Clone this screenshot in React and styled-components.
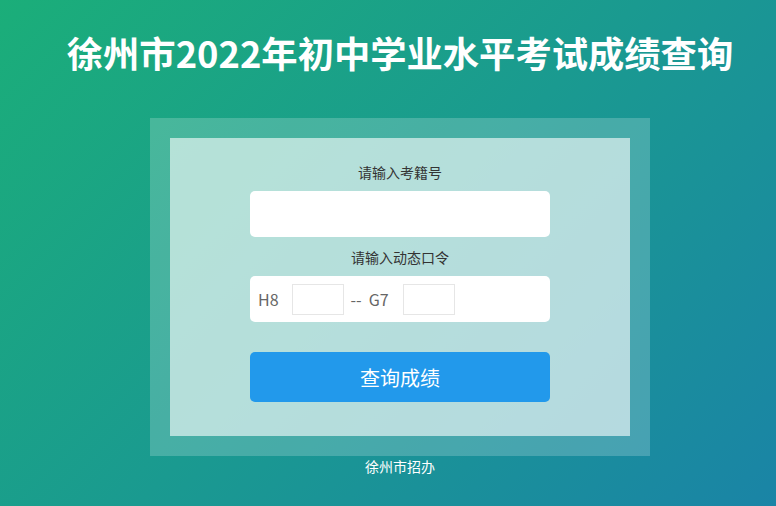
import React from "react"
import styled, { createGlobalStyle } from "styled-components"

const GlobalStyle = createGlobalStyle`
  html, body {
    margin: 0;
    padding: 0;
    overflow: hidden;
  }
  body {
    font-family: "Noto Sans CJK SC", "Noto Sans", sans-serif;
  }
`

const Page = styled.div`
  min-height: 100vh;
  background: linear-gradient(135deg, #1bae79 0%, #1a9a90 50%, #1a84a6 100%);
`

const Inner = styled.div`
  width: 800px;
  display: flex;
  flex-direction: column;
  align-items: center;
`

const Title = styled.h1`
  margin: 27px 0 41px;
  height: 50px;
  line-height: 50px;
  font-size: 36.3px;
  font-weight: bold;
  color: #fff;
  white-space: nowrap;
`

const Frame = styled.div`
  width: 460px;
  padding: 20px;
  background: rgba(255, 255, 255, 0.2);
`

const Card = styled.div`
  height: 298px;
  box-sizing: border-box;
  padding-top: 24px;
  background: rgba(255, 255, 255, 0.6);
  display: flex;
  flex-direction: column;
  align-items: center;
`

const Label = styled.div`
  line-height: 20px;
  font-size: 14px;
  color: #333;
  margin-bottom: ${({ gap }) => gap}px;
`

const Field = styled.div`
  width: 300px;
  height: 46px;
  box-sizing: border-box;
  background: #fff;
  border-radius: 5px;
  display: flex;
  align-items: center;
  padding-left: 8px;
  margin-bottom: ${({ after }) => after}px;
  font-size: 16px;
  color: #666;
`

const Code = styled.span`
  margin-right: ${({ space }) => space}px;
  white-space: pre;
`

const SmallBox = styled.div`
  width: 52px;
  height: 31px;
  box-sizing: border-box;
  border: 1px solid #e6e6e6;
  margin-right: ${({ space }) => space}px;
`

const Button = styled.button`
  width: 300px;
  height: 50px;
  border: none;
  border-radius: 5px;
  background: #2299eb;
  color: #fff;
  font-family: inherit;
  font-size: 20px;
`

const Footer = styled.div`
  line-height: 20px;
  font-size: 14px;
  color: #fff;
`

export default function App() {
  return (
    <Page>
      <GlobalStyle />
      <Inner>
        <Title>徐州市2022年初中学业水平考试成绩查询</Title>
        <Frame>
          <Card>
            <Label gap={9}>请输入考籍号</Label>
            <Field after={10} />
            <Label gap={9}>请输入动态口令</Label>
            <Field after={30}>
              <Code space={13}>H8</Code>
              <SmallBox space={7} />
              <Code space={14}>--  G7</Code>
              <SmallBox space={0} />
            </Field>
            <Button>查询成绩</Button>
          </Card>
        </Frame>
        <Footer>徐州市招办</Footer>
      </Inner>
    </Page>
  )
}
